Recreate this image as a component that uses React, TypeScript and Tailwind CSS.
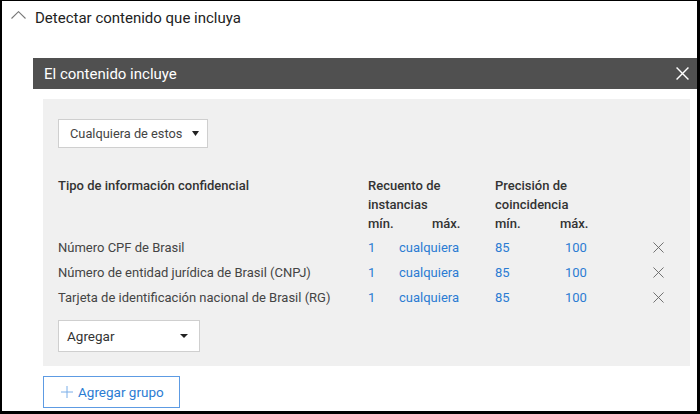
import React from "react";

const rows = [
  "Número CPF de Brasil",
  "Número de entidad jurídica de Brasil (CNPJ)",
  "Tarjeta de identificación nacional de Brasil (RG)",
];

function XIcon({ size, color, sw }: { size: number; color: string; sw: number }) {
  return (
    <svg width={size} height={size} viewBox="0 0 12 12" fill="none">
      <path d="M0.5 0.5 L11.5 11.5 M11.5 0.5 L0.5 11.5" stroke={color} strokeWidth={sw} />
    </svg>
  );
}

export default function App() {
  return (
    <div className="w-[700px] h-[414px] box-border overflow-hidden bg-white border-black border-l-2 border-t border-r-[3px] border-b-[3px] font-['Roboto',sans-serif] text-[#333] whitespace-nowrap">
      <div className="h-[57px] flex items-start pl-[9px]">
        <svg width="15" height="8" viewBox="0 0 15 8" fill="none" className="mt-[10px]">
          <path d="M0.5 7.5 L7.5 0.7 L14.5 7.5" stroke="#777" strokeWidth="1.1" />
        </svg>
        <div className="ml-[9px] mt-[7px] text-[15px] leading-[20px] text-[#222]">
          Detectar contenido que incluya
        </div>
      </div>
      <div className="ml-[31px]">
        <div className="h-[31px] bg-[#505050] flex items-center justify-between pl-[11px] pr-[8px]">
          <span className="text-white text-[15px] leading-[20px]">El contenido incluye</span>
          <XIcon size={13} color="#fff" sw={1.3} />
        </div>
        <div className="ml-[10px] mr-[7px] mt-[10px] h-[267px] bg-[#f0f0f0] pl-[15px] pt-[20px] text-[13px]">
          <div className="w-[150px] h-[29px] bg-white border border-[#cfcfcf] flex items-center pl-[11px] text-[#444]">
            <span className="leading-[18px] text-[12.8px]">Cualquiera de estos</span>
            <svg width="7" height="5" viewBox="0 0 7 5" className="ml-[10px]">
              <path d="M0 0 L7 0 L3.5 5 Z" fill="#222" />
            </svg>
          </div>
          <div className="mt-[28px] flex font-medium text-[#333] leading-[19px] text-[13px]">
            <div className="w-[310px]">Tipo de información confidencial</div>
            <div className="w-[127px]">
              <div>Recuento de</div>
              <div>instancias</div>
              <div className="flex">
                <span className="w-[64px]">mín.</span>
                <span>máx.</span>
              </div>
            </div>
            <div>
              <div>Precisión de</div>
              <div>coincidencia</div>
              <div className="flex">
                <span className="w-[65px]">mín.</span>
                <span>máx.</span>
              </div>
            </div>
          </div>
          <div className="mt-[2px]">
            {rows.map((r) => (
              <div key={r} className="flex items-center h-[25px] text-[13px]">
                <div className="w-[310px] text-[#444]">{r}</div>
                <div className="w-[31px] text-[#2b7cd3]">1</div>
                <div className="w-[96px] text-[#2b7cd3]">cualquiera</div>
                <div className="w-[70px] text-[#2b7cd3]">85</div>
                <div className="w-[88px] text-[#2b7cd3]">100</div>
                <XIcon size={11} color="#666" sw={1} />
              </div>
            ))}
          </div>
          <div className="mt-[10px] w-[142px] h-[32px] bg-white border border-[#cfcfcf] flex items-center justify-between pl-[8px] pr-[11px] text-[#333] text-[13.5px]">
            <span>Agregar</span>
            <svg width="8" height="4" viewBox="0 0 8 4">
              <path d="M0 0 L8 0 L4 4 Z" fill="#222" />
            </svg>
          </div>
        </div>
        <div className="ml-[10px] mt-[10px] w-[137px] h-[32px] border border-[#5d9be3] flex items-center pl-[17px] text-[#2b7cd3] text-[13.5px]">
          <svg width="12" height="12" viewBox="0 0 12 12" fill="none">
            <path d="M6 0 V12 M0 6 H12" stroke="#7aaee8" strokeWidth="1" />
          </svg>
          <span className="ml-[5px] leading-[18px]">Agregar grupo</span>
        </div>
      </div>
    </div>
  );
}
